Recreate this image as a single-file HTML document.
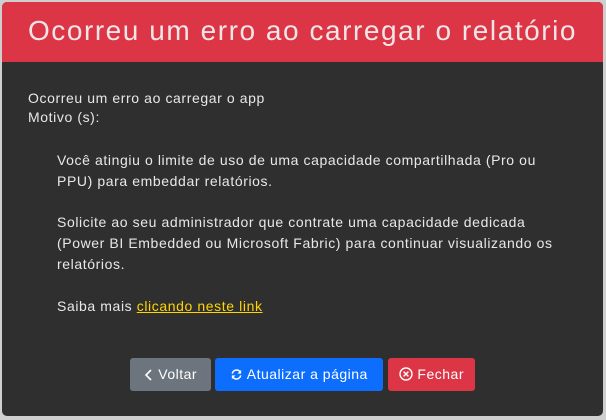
<!DOCTYPE html>
<html><head><meta charset="utf-8"><style>
html,body{margin:0;padding:0;width:606px;height:420px;background:#cfcfcf;overflow:hidden;font-family:"Liberation Sans",sans-serif;}
.card{position:absolute;left:2px;top:2px;width:601px;height:414px;background:#2f2f2f;border-radius:5px;overflow:hidden;}
.hd{height:60px;background:#dc3545;color:#f0e6e8;font-size:28px;text-align:center;line-height:58px;letter-spacing:1.55px;}
.t{position:absolute;color:#e8e8e8;font-size:14px;line-height:21px;white-space:nowrap;letter-spacing:0.6px;}
a{color:#ffd500;text-decoration:underline;}
.btn{position:absolute;top:356px;height:33px;border-radius:3px;color:#fff;font-size:14px;line-height:33px;text-align:center;white-space:nowrap;letter-spacing:0.5px;}
svg{vertical-align:-2px;}
</style></head><body>
<div class="card">
<div class="hd">Ocorreu um erro ao carregar o relatório</div>
<div class="t" style="left:26px;top:87px;line-height:19px">Ocorreu um erro ao carregar o app<br>Motivo (s):</div>
<div class="t" style="left:55px;top:148px">Você atingiu o limite de uso de uma capacidade compartilhada (Pro ou<br>PPU) para embeddar relatórios.</div>
<div class="t" style="left:55px;top:210px">Solicite ao seu administrador que contrate uma capacidade dedicada<br>(Power BI Embedded ou Microsoft Fabric) para continuar visualizando os<br>relatórios.</div>
<div class="t" style="left:55px;top:294px">Saiba mais <a>clicando neste link</a></div>
<div class="btn" style="left:128px;width:81px;background:#6c757d"><svg width="10" height="12" viewBox="0 0 10 12"><path d="M7 1L2 6l5 5" stroke="#fff" stroke-width="1.6" fill="none"/></svg> Voltar</div>
<div class="btn" style="left:213px;width:168px;background:#0d6efd"><svg width="13" height="13" viewBox="0 0 14 14"><path d="M2.5 6A4.6 4.6 0 0 1 11 4.5M11.5 8A4.6 4.6 0 0 1 3 9.5" stroke="#fff" stroke-width="1.6" fill="none"/><path d="M12 2v4h-4zM2 12V8h4z" fill="#fff"/></svg> Atualizar a página</div>
<div class="btn" style="left:386px;width:87px;background:#dc3545"><svg width="14" height="14" viewBox="0 0 14 14"><circle cx="7" cy="7" r="6" stroke="#fff" stroke-width="1.4" fill="none"/><path d="M4.6 4.6l4.8 4.8M9.4 4.6l-4.8 4.8" stroke="#fff" stroke-width="1.4"/></svg> Fechar</div>
</div>
</body></html>
